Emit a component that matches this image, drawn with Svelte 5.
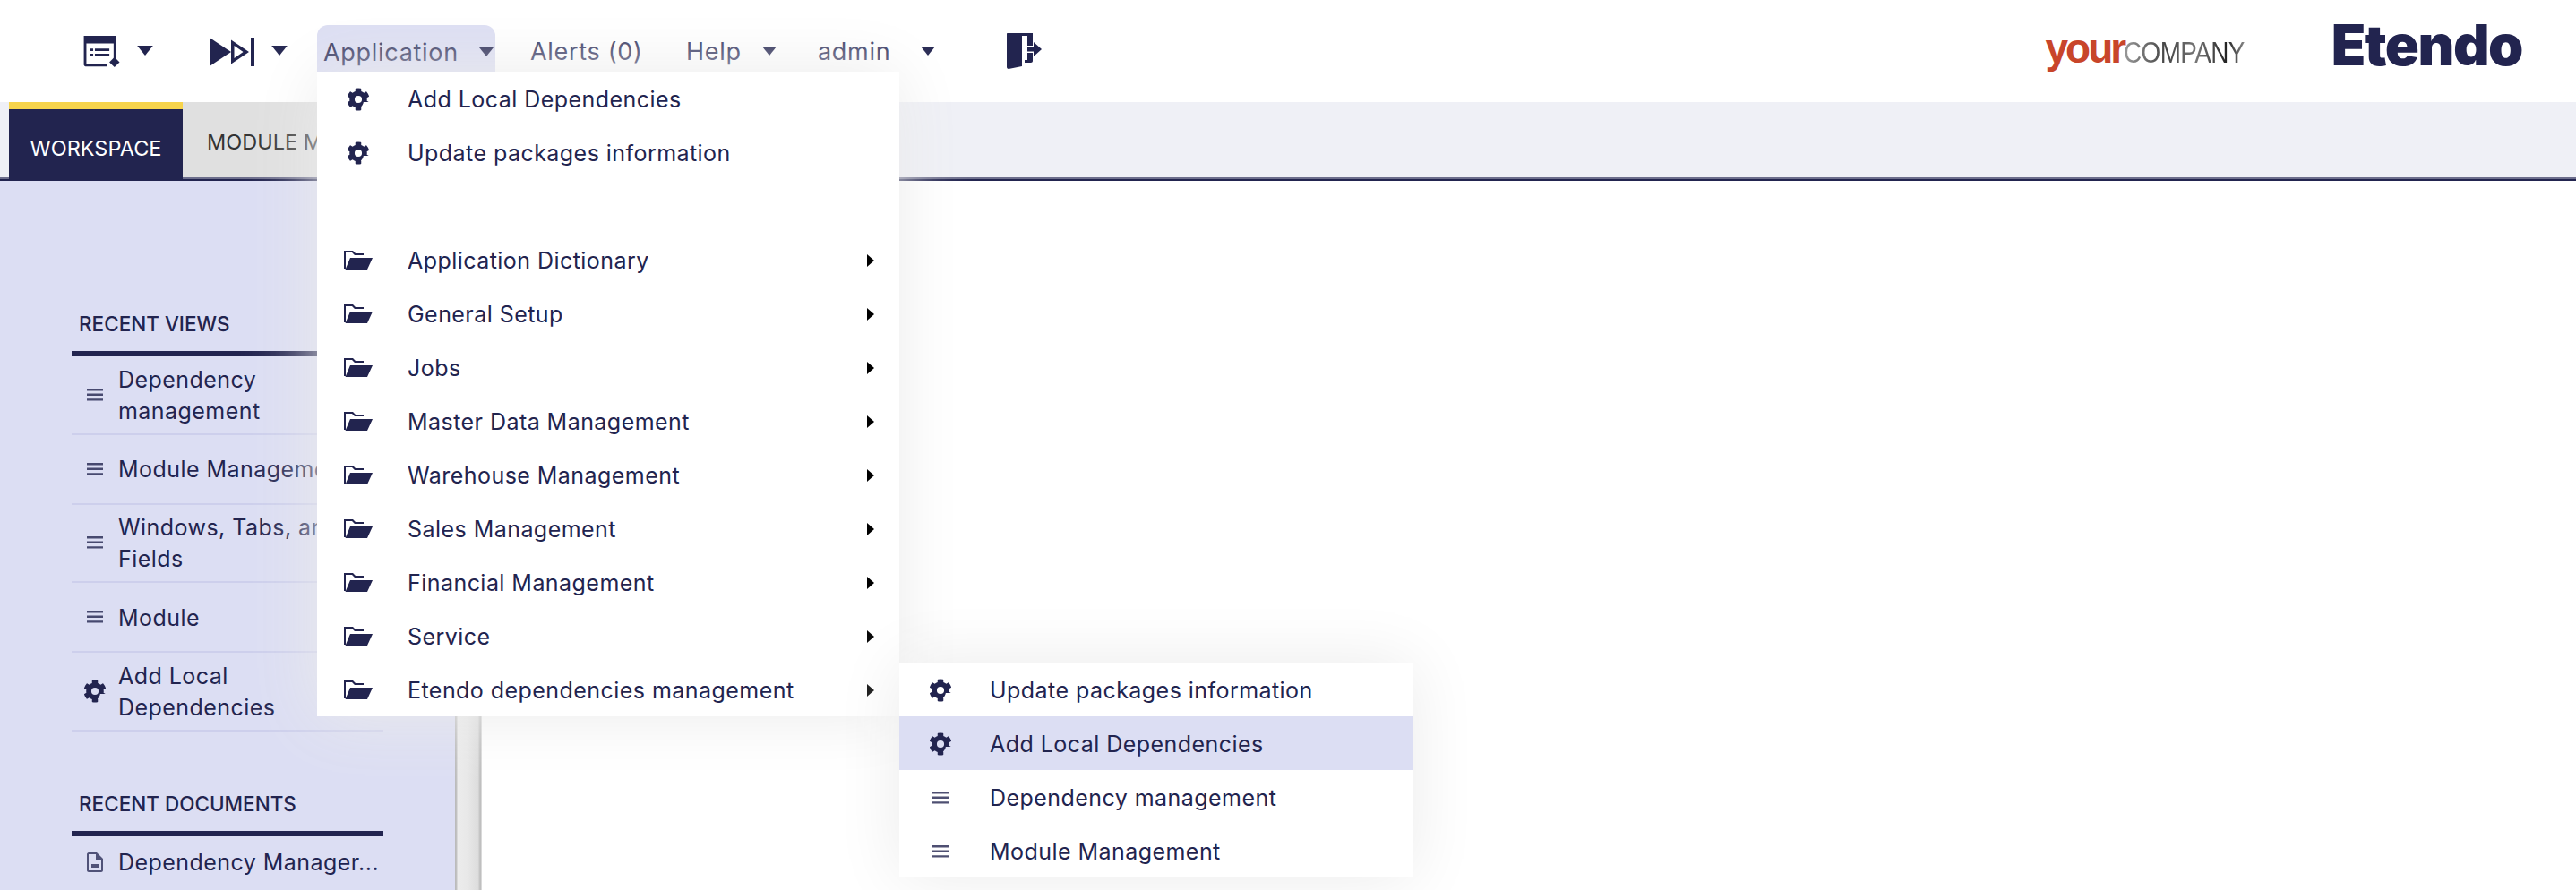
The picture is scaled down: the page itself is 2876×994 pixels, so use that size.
<script>
  const navItems = [
    { label: 'Application', caret: true, active: true },
    { label: 'Alerts (0)', caret: false },
    { label: 'Help', caret: true },
    { label: 'admin', caret: true }
  ];

  const recentViews = [
    { label: 'Dependency management', icon: 'lines', h: 'tall' },
    { label: 'Module Management', icon: 'lines', h: 'short', nowrap: true },
    { label: 'Windows, Tabs, and Fields', icon: 'lines', h: 'tall' },
    { label: 'Module', icon: 'lines', h: 'short' },
    { label: 'Add Local Dependencies', icon: 'gear', h: 'tall' }
  ];

  const folders = [
    'Application Dictionary',
    'General Setup',
    'Jobs',
    'Master Data Management',
    'Warehouse Management',
    'Sales Management',
    'Financial Management',
    'Service',
    'Etendo dependencies management'
  ];

  const subItems = [
    { label: 'Update packages information', icon: 'gear' },
    { label: 'Add Local Dependencies', icon: 'gear', hover: true },
    { label: 'Dependency management', icon: 'lines' },
    { label: 'Module Management', icon: 'lines' }
  ];
</script>

{#snippet caret()}
  <svg class="caret" viewBox="0 0 16 10"><path d="M0 0h16L8 10z" /></svg>
{/snippet}

{#snippet gear()}
  <svg class="gear" viewBox="0 0 512 512">
    <path d="M487 316l-42-25a190 190 0 0 0 0-70l42-25c5-3 7-9 5-14-11-35-30-67-54-93-4-4-10-5-15-2l-42 25a187 187 0 0 0-61-35V28c0-6-4-11-9-12a220 220 0 0 0-110 0c-5 1-9 6-9 12v49a190 190 0 0 0-61 35L89 87c-5-3-11-2-15 2-24 26-43 58-54 93-2 5 0 11 5 14l42 25a190 190 0 0 0 0 70l-42 25c-5 3-7 9-5 14 11 35 30 67 54 93 4 4 10 5 15 2l42-25a187 187 0 0 0 61 35v49c0 6 4 11 9 12a220 220 0 0 0 110 0c5-1 9-6 9-12v-49a190 190 0 0 0-61-35l42 25c5 3 11 2 15-2 24-26 43-58 54-93 2-5 0-11-5-14zM256 336a80 80 0 1 1 0-160 80 80 0 0 1 0 160z" />
  </svg>
{/snippet}

{#snippet lines()}
  <svg class="lines" viewBox="0 0 18 14"><path d="M0 0h18v2.400H0zM0 5.600h18V8H0zM0 11.200h18v2.400H0z" /></svg>
{/snippet}

{#snippet folder()}
  <svg class="folder" viewBox="0 0 32 22">
    <path d="M0 0h10l3 3h9v2H12L9 2H2v18H0z" />
    <path d="M7 8h25l-6 13H1.500z" />
  </svg>
{/snippet}

<div class="page">
  <header class="topbar">
    <div class="tools">
      <button class="tool first">
        <svg class="tool-icon" viewBox="0 0 44 40">
          <path d="M0 1h38v28h-3v-19H3v24h24v3H2c-1 0-2-1-2-2z" />
          <path d="M7 16h4v3H7zM7 22h4v3H7zM13 16h17v3H13zM13 22h17v3H13z" />
          <path d="M36 26l6 6-6 6-6-6z" />
        </svg>
        {@render caret()}
      </button>
      <button class="tool second">
        <svg class="tool-icon wide" viewBox="0 0 52 32">
          <path d="M0 0l24 16L0 32z" />
          <path d="M24 2.500l20 13.500-20 13.500zM27.500 9v14l10-7z" fill-rule="evenodd" />
          <path d="M46 0h4v32h-4z" />
        </svg>
        {@render caret()}
      </button>
    </div>
    <nav class="nav">
      {#each navItems as item}
        <button class="nav-item" class:active={item.active}>
          <span>{item.label}</span>
          {#if item.caret}{@render caret()}{/if}
        </button>
      {/each}
    </nav>
    <button class="logout" aria-label="Log out">
      <svg viewBox="0 0 40 40">
        <path d="M1 0h29v14h-6V3h-6v34l-15 3c-1 0-2-1-2-2V1c0-.6.4-1 1-1z" />
        <path d="M24 22h6v9c0 1-.8 2-2 2h-7v-3h3zM24 15.500h7V10l9 8-9 8v-5.500h-7z" />
      </svg>
    </button>
    <div class="logos">
      <div class="logo-company"><b>your</b><span>COMPANY</span></div>
      <div class="logo-etendo">Etendo</div>
    </div>
  </header>

  <div class="tabbar">
    <div class="tab current">WORKSPACE</div>
    <div class="tab">MODULE MANAGEMENT</div>
  </div>

  <div class="content">
    <aside class="sidebar">
      <section class="recent views">
        <h4>RECENT VIEWS</h4>
        <ul>
          {#each recentViews as view}
            <li class={view.h}>
              <span class="row-icon">
                {#if view.icon === 'gear'}{@render gear()}{:else}{@render lines()}{/if}
              </span>
              <span class="row-label" class:nowrap={view.nowrap}>{view.label}</span>
            </li>
          {/each}
        </ul>
      </section>
      <section class="recent docs">
        <h4>RECENT DOCUMENTS</h4>
        <ul>
          <li class="doc">
            <span class="row-icon">
              <svg class="doc-icon" viewBox="0 0 18 22">
                <path fill-rule="evenodd" d="M2 0h9l7 7v13c0 1-1 2-2 2H2c-1 0-2-1-2-2V2c0-1 1-2 2-2zM2 2v18h14V8h-6V2zM5 13h8v4H5z" />
              </svg>
            </span>
            <span class="row-label nowrap">Dependency Manager...</span>
          </li>
        </ul>
      </section>
    </aside>
    <div class="splitter"></div>
    <main class="main"></main>
  </div>

  <div class="menu app-menu">
    <div class="menu-row">
      <span class="menu-icon">{@render gear()}</span>
      <span>Add Local Dependencies</span>
    </div>
    <div class="menu-row">
      <span class="menu-icon">{@render gear()}</span>
      <span>Update packages information</span>
    </div>
    <div class="menu-row"></div>
    {#each folders as name}
      <div class="menu-row">
        <span class="menu-icon">{@render folder()}</span>
        <span class="grow">{name}</span>
        <svg class="sub-arrow" viewBox="0 0 8 14"><path d="M0 0l8 7-8 7z" /></svg>
      </div>
    {/each}
  </div>

  <div class="menu sub-menu">
    {#each subItems as item}
      <div class="menu-row" class:hover={item.hover}>
        <span class="menu-icon">
          {#if item.icon === 'gear'}{@render gear()}{:else}{@render lines()}{/if}
        </span>
        <span>{item.label}</span>
      </div>
    {/each}
  </div>
</div>

<style>
  :global(body) {
    margin: 0;
    background: #fff;
  }
  .page {
    position: relative;
    width: 2876px;
    height: 994px;
    overflow: hidden;
    font-family: Inter, 'Open Sans', sans-serif;
    font-size: 25px;
    letter-spacing: 0.45px;
    color: #22244f;
  }
  button {
    border: 0;
    background: none;
    padding: 0;
    font: inherit;
    letter-spacing: inherit;
    color: inherit;
    display: flex;
    align-items: center;
  }
  svg path {
    fill: currentColor;
  }

  .topbar {
    height: 114px;
    display: flex;
    align-items: flex-start;
    padding-left: 92px;
    box-sizing: border-box;
  }
  .tools {
    display: flex;
    padding-top: 39px;
  }
  .tool {
    gap: 16px;
    width: 142px;
  }
  .tool.second {
    width: 120px;
    gap: 17px;
  }
  .tool-icon {
    width: 45px;
    height: 38px;
  }
  .tool-icon.wide {
    width: 52px;
    height: 32px;
  }
  .caret {
    width: 16px;
    height: 10px;
    color: #22244f;
  }
  .tool .caret {
    width: 18px;
    height: 11px;
    margin-top: -4px;
  }

  .nav {
    display: grid;
    grid-template-columns: 238px 174px 147px 177px;
    padding-top: 28px;
    font-size: 27px;
    letter-spacing: 0.7px;
    color: #33355f;
  }
  .nav-item {
    height: 52px;
    width: calc(100% - 46px);
    padding-top: 6px;
    box-sizing: border-box;
    justify-content: space-between;
  }
  .nav-item.active {
    width: 199px;
    padding: 8px 2px 0 7px;
    border-radius: 12px 12px 0 0;
    background: #dcdef3;
  }
  .logout {
    width: 40px;
    height: 40px;
    margin: 37px 0 0 33px;
  }
  .logout svg {
    width: 40px;
    height: 40px;
  }
  .logos {
    margin-left: auto;
    display: flex;
    align-items: center;
    height: 100px;
    padding-right: 60px;
    gap: 96px;
  }
  .logo-company {
    font-family: 'Liberation Sans', sans-serif;
    font-size: 34px;
    letter-spacing: -0.7px;
    margin-top: 8px;
  }
  .logo-company span {
    display: inline-block;
    margin-right: -29px;
    transform: scaleX(0.82);
    transform-origin: left center;
    color: transparent;
    background: linear-gradient(90deg, #9a9a9a, #444 35%, #777 60%, #222 85%, #8a8a8a);
    background-clip: text;
    -webkit-background-clip: text;
  }
  .logo-company b {
    color: #c8452a;
    font-weight: 700;
    font-size: 46px;
    letter-spacing: -3px;
  }
  .logo-etendo {
    font-size: 63px;
    font-weight: 900;
    letter-spacing: -1.5px;
    color: #22244f;
  }

  .tabbar {
    height: 88px;
    display: flex;
    align-items: stretch;
    padding-left: 10px;
    background: #eff0f6;
    border-bottom: 2px solid #22244f;
    box-shadow: inset 0 -2px 0 #6d6e8c;
    box-sizing: border-box;
  }
  .tab {
    padding: 4px 27px 0;
    margin-bottom: 2px;
    display: flex;
    align-items: center;
    font-size: 23.5px;
    letter-spacing: 0;
    background: #e0e0e0;
    color: #333;
  }
  .tab.current {
    width: 194px;
    margin-bottom: -2px;
    box-sizing: border-box;
    justify-content: center;
    padding: 6px 0 0;
    background: #22244f;
    color: #fff;
    border-top: 8px solid #f7d44c;
  }

  .content {
    display: flex;
    height: 792px;
  }
  .sidebar {
    width: 508px;
    background: #dcdef3;
    padding: 142px 0 0 80px;
    box-sizing: border-box;
  }
  .splitter {
    width: 30px;
    background: linear-gradient(90deg, #b8b8b8 0, #c4c4c4 2px, #ececec 3px, #e8e8e8 14px, #dcdcdc 26px, #c8c8c8 27px, #bcbcbc 29px, #f6f6f6 30px);
  }
  .main {
    flex: 1;
    background: #fff;
  }

  .recent {
    width: 348px;
  }
  .recent.docs {
    margin-top: 63px;
  }
  h4 {
    margin: 0;
    height: 48px;
    padding-left: 8px;
    font-size: 22.5px;
    font-weight: 500;
    letter-spacing: 0;
    line-height: 36px;
    border-bottom: 6px solid #22244f;
    box-sizing: content-box;
  }
  ul {
    list-style: none;
    margin: 0;
    padding: 0;
  }
  li {
    display: flex;
    align-items: center;
    border-bottom: 2px solid #cdcfec;
    line-height: 35px;
    box-sizing: border-box;
  }
  li.tall {
    height: 87.5px;
  }
  li.short {
    height: 78px;
  }
  li.doc {
    height: 58px;
    border-bottom: 0;
  }
  .row-icon {
    width: 52px;
    flex: none;
    display: flex;
    justify-content: center;
  }
  .row-label {
    flex: 1;
    min-width: 0;
    padding: 2px 20px 0 0;
  }
  .row-label.nowrap {
    padding-right: 0;
    white-space: nowrap;
  }
  .gear {
    width: 26px;
    height: 28px;
  }
  .lines {
    width: 18px;
    height: 14px;
    opacity: 0.8;
  }
  .doc-icon {
    width: 18px;
    height: 22px;
    opacity: 0.75;
  }
  .folder {
    width: 32px;
    height: 22px;
  }

  .menu {
    position: absolute;
    background: #fff;
    box-shadow: 0 0 70px rgba(235, 235, 235, 1);
  }
  .app-menu {
    left: 354px;
    top: 80px;
    width: 650px;
  }
  .sub-menu {
    left: 1004px;
    top: 740px;
    width: 574px;
  }
  .menu-row {
    height: 60px;
    display: flex;
    align-items: center;
    padding: 1px 28px 0 0;
    box-sizing: border-box;
  }
  .menu-row.hover {
    background: #dcdef3;
  }
  .menu-icon {
    width: 101px;
    flex: none;
    padding-right: 9px;
    box-sizing: border-box;
    display: flex;
    justify-content: center;
  }
  .grow {
    flex: 1;
  }
  .sub-arrow {
    width: 8px;
    height: 14px;
    color: #000;
  }
</style>
